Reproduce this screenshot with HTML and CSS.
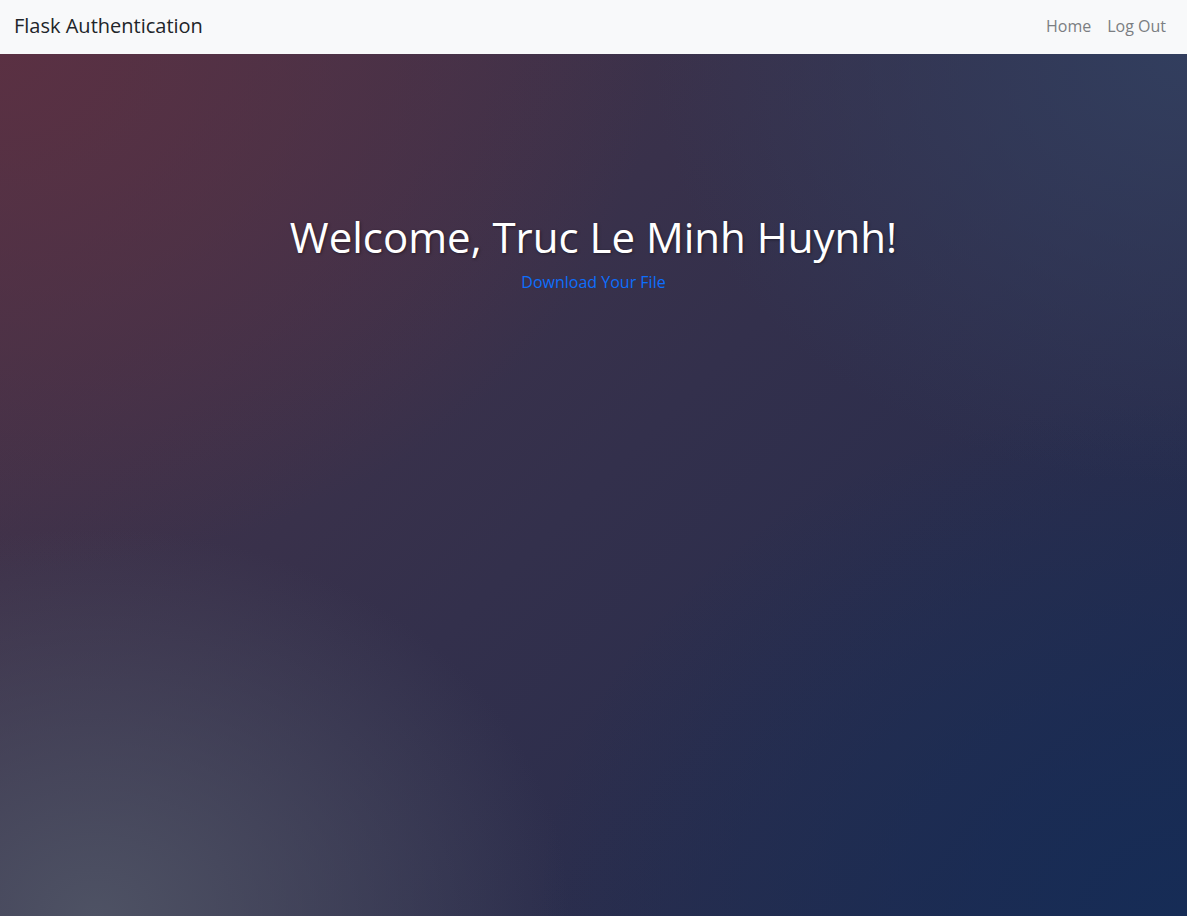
FILE: index.html
```html
<!DOCTYPE html>
<html lang="en">
<head>
<meta charset="utf-8">
<title>Flask Authentication</title>
<link rel="stylesheet" href="styles.css">
</head>
<body>
<nav class="navbar">
  <a class="brand" href="#">Flask Authentication</a>
  <div class="nav-links">
    <a class="nav-link" href="#">Home</a>
    <a class="nav-link" href="#">Log Out</a>
  </div>
</nav>
<main class="hero">
  <h1 class="title">Welcome, Truc Le Minh Huynh!</h1>
  <a class="download" href="#">Download Your File</a>
</main>
</body>
</html>
```
FILE: styles.css
```css
html, body {
  margin: 0;
  padding: 0;
  height: 100%;
}
body {
  font-family: "Open Sans", "Noto Sans", sans-serif;
  display: flex;
  flex-direction: column;
  background: #2b2c48;
}
.navbar {
  height: 54px;
  flex: 0 0 54px;
  box-sizing: border-box;
  background: #f8f9fa;
  display: flex;
  align-items: center;
  justify-content: space-between;
  padding: 0 21px 3px 14px;
}
.brand {
  font-size: 20px;
  color: #212529;
  text-decoration: none;
}
.nav-links {
  display: flex;
  gap: 16px;
  padding-top: 1px;
}
.nav-link {
  font-size: 16px;
  color: #7b7e82;
  text-decoration: none;
}
.hero {
  flex: 1;
  display: flex;
  flex-direction: column;
  align-items: center;
  padding-top: 158px;
  background:
    radial-gradient(ellipse 55% 60% at 0% 0%, rgba(92, 48, 66, 0.9), rgba(92, 48, 66, 0) 100%),
    radial-gradient(ellipse 40% 45% at 8% 100%, rgba(78, 82, 100, 1), rgba(78, 82, 100, 0) 100%),
    radial-gradient(ellipse 55% 60% at 100% 100%, rgba(22, 44, 86, 1), rgba(22, 44, 86, 0) 100%),
    radial-gradient(ellipse 45% 50% at 100% 0%, rgba(50, 62, 94, 1), rgba(50, 62, 94, 0) 100%),
    linear-gradient(135deg, #4a3448 0%, #33304c 50%, #1f2a4e 100%);
}
.title {
  margin: 0;
  font-size: 42px;
  font-weight: 400;
  color: #ffffff;
  line-height: 1.2;
  text-shadow: 1px 1px 3px rgba(0, 0, 0, 0.4);
}
.download {
  margin-top: 9px;
  font-size: 16px;
  color: #0d6efd;
  text-decoration: none;
}
```
